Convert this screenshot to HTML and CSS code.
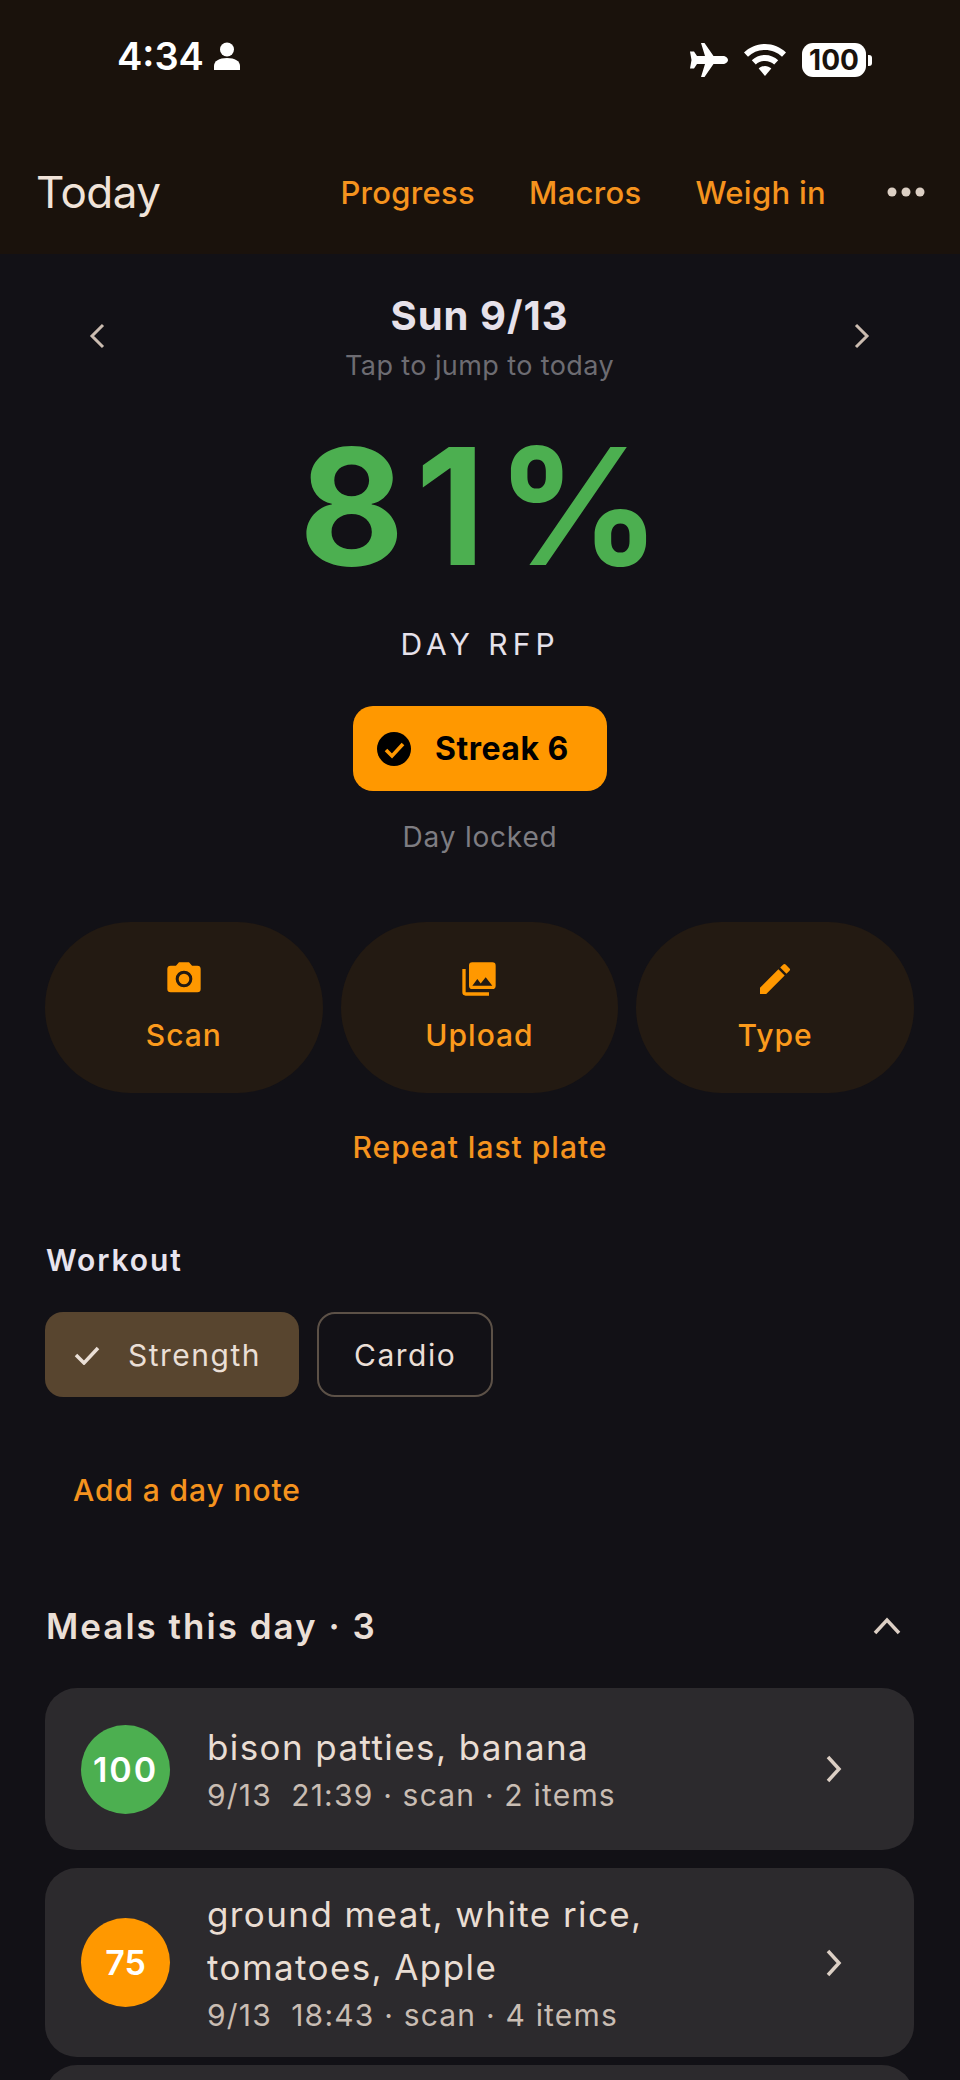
FILE: index.html
```html
<!DOCTYPE html>
<html lang="en">
<head>
  <meta charset="UTF-8">
  <title>Today</title>
  <link rel="stylesheet" href="styles.css">
</head>
<body>
  <header class="top">
    <div class="status">
      <div class="status-left">
        <span class="clock">4:34</span>
        <svg class="person" viewBox="0 0 26 28"><circle cx="13" cy="7.500" r="7"/><path d="M0 28v-4c0-5 5-8 13-8s13 3 13 8v4z"/></svg>
      </div>
      <div class="status-right">
        <svg class="plane" viewBox="0 0 38 34"><path d="M11 0h3.500l9 13h9.500c2.500 0 5 1.800 5 4s-2.500 4-5 4h-9.500l-9 13H11l4-13H7l-3 4.500H0l1.500-8.500L0 8.500h4L7 13h8z"/></svg>
        <svg class="wifi" viewBox="0 0 42 32"><path d="M21 0c8 0 15.500 3.200 21 8.500l-4 4.200C33.500 8.300 27.500 6 21 6S8.500 8.300 4 12.700L0 8.500C5.500 3.200 13 0 21 0z"/><path d="M21 11c5 0 9.700 2 13.200 5.300l-4 4.200C27.800 18.200 24.500 17 21 17s-6.800 1.200-9.200 3.500l-4-4.200C11.300 13 16 11 21 11z"/><path d="M21 22c2.300 0 4.600.9 6.300 2.400L21 32l-6.300-7.600c1.700-1.500 4-2.400 6.300-2.400z"/></svg>
        <div class="battery"><span class="battery-level">100</span><span class="battery-cap"></span></div>
      </div>
    </div>
    <nav class="appbar">
      <h1 class="title">Today</h1>
      <div class="links">
        <a class="link">Progress</a>
        <a class="link">Macros</a>
        <a class="link">Weigh in</a>
        <svg class="more" viewBox="0 0 38 12"><circle cx="5" cy="6" r="4.500"/><circle cx="19" cy="6" r="4.500"/><circle cx="33" cy="6" r="4.500"/></svg>
      </div>
    </nav>
  </header>

  <main class="content">
    <section class="date-row">
      <svg class="chev-side" viewBox="0 0 16 26"><path d="M14 2 3 13l11 11"/></svg>
      <div class="date-mid">
        <div class="date">Sun 9/13</div>
        <div class="date-hint">Tap to jump to today</div>
      </div>
      <svg class="chev-side" viewBox="0 0 16 26"><path d="m2 2 11 11L2 24"/></svg>
    </section>

    <section class="score">
      <div class="pct">81%</div>
      <div class="pct-label">DAY RFP</div>
      <button class="streak">
        <svg class="streak-icon" viewBox="0 0 34 34"><circle cx="17" cy="17" r="17" fill="#000"/><path d="m9 18 6 6 11-12" fill="none" stroke="#ff9800" stroke-width="3.600"/></svg>
        Streak 6
      </button>
      <div class="locked">Day locked</div>
    </section>

    <section class="actions">
      <button class="action">
        <svg class="action-icon" viewBox="0 0 24 24"><path d="M9 2 7.170 4H4a2 2 0 0 0-2 2v12a2 2 0 0 0 2 2h16a2 2 0 0 0 2-2V6a2 2 0 0 0-2-2h-3.170L15 2zm3 15a5 5 0 1 1 0-10 5 5 0 0 1 0 10z"/><circle cx="12" cy="12" r="3.200"/></svg>
        Scan
      </button>
      <button class="action">
        <svg class="action-icon" viewBox="0 0 24 24"><path d="M22 16V4a2 2 0 0 0-2-2H8a2 2 0 0 0-2 2v12a2 2 0 0 0 2 2h12a2 2 0 0 0 2-2zm-11-4 2.030 2.710L16 11l4 5H8zM2 6v14a2 2 0 0 0 2 2h14v-2H4V6z"/></svg>
        Upload
      </button>
      <button class="action">
        <svg class="action-icon" viewBox="0 0 24 24"><path d="M3 17.250V21h3.750L17.810 9.940l-3.750-3.750zM20.710 7.040a1 1 0 0 0 0-1.410l-2.340-2.340a1 1 0 0 0-1.410 0l-1.830 1.830 3.750 3.750z"/></svg>
        Type
      </button>
    </section>
    <a class="repeat">Repeat last plate</a>

    <section class="workout">
      <h2 class="workout-title">Workout</h2>
      <div class="chips">
        <span class="chip chip-on">
          <svg class="chip-check" viewBox="0 0 26 20"><path d="m2 10 8 8L24 3"/></svg>
          Strength
        </span>
        <span class="chip">Cardio</span>
      </div>
    </section>

    <a class="note">Add a day note</a>

    <div class="meals-head">
      <h2 class="meals-title">Meals this day · 3</h2>
      <svg class="chev-up" viewBox="0 0 28 18"><path d="m2 16 12-13 12 13"/></svg>
    </div>

    <section class="meals">
      <article class="meal">
        <span class="badge badge-green">100</span>
        <div class="meal-body">
          <div class="meal-name">bison patties, banana</div>
          <div class="meal-meta">9/13&nbsp; 21:39 · scan · 2 items</div>
        </div>
        <svg class="chev-row" viewBox="0 0 18 28"><path d="m3 2 11 12L3 26"/></svg>
      </article>
      <article class="meal">
        <span class="badge badge-orange">75</span>
        <div class="meal-body">
          <div class="meal-name">ground meat, white rice,<br>tomatoes, Apple</div>
          <div class="meal-meta">9/13&nbsp; 18:43 · scan · 4 items</div>
        </div>
        <svg class="chev-row" viewBox="0 0 18 28"><path d="m3 2 11 12L3 26"/></svg>
      </article>
      <article class="meal meal-cut"></article>
    </section>
  </main>
</body>
</html>
```

FILE: styles.css
```css
* {
  box-sizing: border-box;
}
html, body {
  margin: 0;
  height: 2080px;
  overflow: hidden;
}
body {
  background: #121116;
  color: #e8e4ee;
  font-family: Inter, "Noto Sans", sans-serif;
}
button {
  font-family: inherit;
  border: 0;
}

.top {
  height: 254px;
  background: #1a120c;
}
.content {
  height: 1826px;
  overflow: hidden;
}
.status {
  height: 147px;
  padding: 34px 88px 0 117px;
  display: flex;
  justify-content: space-between;
  align-items: flex-start;
}
.status-left {
  display: flex;
  align-items: center;
  gap: 10px;
}
.clock {
  font-size: 38px;
  line-height: 44px;
  font-weight: 600;
  color: #fff;
}
.person {
  width: 26px;
  height: 28px;
  fill: #fff;
}
.status-right {
  margin-top: 9px;
  display: flex;
  align-items: center;
  gap: 16px;
}
.plane {
  width: 38px;
  height: 34px;
  fill: #fff;
}
.wifi {
  width: 42px;
  height: 32px;
  fill: #fff;
}
.battery {
  display: flex;
  align-items: center;
  gap: 2px;
}
.battery-level {
  width: 64px;
  height: 34px;
  border-radius: 11px;
  background: #fff;
  color: #1a120c;
  font-size: 28px;
  line-height: 34px;
  font-weight: 700;
  text-align: center;
}
.battery-cap {
  width: 4px;
  height: 11px;
  background: #fff;
  border-radius: 0 3px 3px 0;
}

.appbar {
  padding: 0 35px 0 36px;
  height: 90px;
  display: flex;
  justify-content: space-between;
  align-items: center;
}
.title {
  margin: 0;
  font-size: 44px;
  font-weight: 400;
  letter-spacing: -0.5px;
  color: #f0e3d9;
}
.links {
  display: flex;
  align-items: center;
  gap: 54px;
}
.link {
  font-size: 31px;
  font-weight: 500;
  letter-spacing: 0.3px;
  color: #f5931e;
}
.more {
  width: 38px;
  height: 12px;
  margin-left: 7px;
  fill: #dccfc4;
}

.date-row {
  padding: 38px 90px 0 89px;
  display: flex;
  justify-content: space-between;
  align-items: flex-start;
}
.chev-side {
  margin-top: 31px;
  width: 16px;
  height: 26px;
  fill: none;
  stroke: #cbbcb0;
  stroke-width: 3;
}
.date-mid {
  text-align: center;
}
.date {
  font-size: 40px;
  line-height: 48px;
  font-weight: 700;
  letter-spacing: 1px;
  color: #e6e1ea;
}
.date-hint {
  margin-top: 8px;
  font-size: 27px;
  line-height: 36px;
  letter-spacing: 0.4px;
  color: #6d6c72;
}

.score {
  margin-top: 27px;
  display: flex;
  flex-direction: column;
  align-items: center;
}
.pct {
  padding-left: 11px;
  font-size: 162px;
  line-height: 190px;
  font-weight: 700;
  letter-spacing: 11px;
  color: #4caf50;
}
.pct-label {
  margin-top: 23px;
  font-size: 30px;
  line-height: 40px;
  letter-spacing: 5px;
  color: #e6e1ea;
}
.streak {
  margin-top: 42px;
  width: 254px;
  height: 85px;
  padding: 0 24px;
  border-radius: 20px;
  background: #ff9800;
  color: #000;
  font-size: 32px;
  font-weight: 700;
  letter-spacing: 0.5px;
  display: flex;
  align-items: center;
  gap: 24px;
}
.streak-icon {
  width: 34px;
  height: 34px;
  flex: none;
}
.locked {
  margin-top: 26px;
  font-size: 28px;
  line-height: 40px;
  letter-spacing: 0.8px;
  color: #7e7d82;
}

.actions {
  margin: 65px 46px 0 45px;
  display: grid;
  grid-template-columns: repeat(3, 1fr);
  gap: 18px;
}
.action {
  height: 171px;
  border-radius: 86px;
  background: #231a12;
  color: #fb9a1c;
  font-size: 30px;
  font-weight: 500;
  letter-spacing: 1px;
  display: flex;
  flex-direction: column;
  align-items: center;
  gap: 18px;
  padding-top: 37px;
}
.action-icon {
  width: 40px;
  height: 40px;
  fill: #ff9800;
}
.repeat {
  display: block;
  margin-top: 34px;
  text-align: center;
  font-size: 30px;
  line-height: 40px;
  font-weight: 500;
  letter-spacing: 1px;
  color: #f5931e;
}

.workout {
  margin: 73px 45px 0;
}
.workout-title {
  margin: 0 0 0 1px;
  font-size: 30px;
  line-height: 40px;
  font-weight: 600;
  letter-spacing: 1.900px;
  color: #e8e4ee;
}
.chips {
  margin-top: 32px;
  display: flex;
  gap: 18px;
}
.chip {
  height: 85px;
  padding: 0 35px;
  border: 2px solid #5c5147;
  border-radius: 18px;
  font-size: 30px;
  letter-spacing: 1.500px;
  color: #eadfd6;
  display: flex;
  align-items: center;
}
.chip-on {
  padding: 0 38px 0 29px;
  border: 0;
  background: #58452f;
  gap: 28px;
}
.chip-check {
  width: 26px;
  height: 20px;
  fill: none;
  stroke: #eadfd6;
  stroke-width: 3.500;
}
.note {
  display: block;
  margin: 73px 0 0 73px;
  font-size: 30px;
  line-height: 40px;
  font-weight: 500;
  letter-spacing: 0.9px;
  color: #f5931e;
}

.meals-head {
  margin: 94px 59px 0 46px;
  display: flex;
  justify-content: space-between;
  align-items: center;
}
.meals-title {
  margin: 0;
  font-size: 35px;
  line-height: 44px;
  font-weight: 600;
  letter-spacing: 2px;
  color: #eadfd6;
}
.chev-up {
  width: 28px;
  height: 18px;
  fill: none;
  stroke: #dccfc4;
  stroke-width: 3.500;
}
.meals {
  margin: 40px 46px 0 45px;
  display: flex;
  flex-direction: column;
  gap: 18px;
}
.meal {
  min-height: 162px;
  padding: 20px 71px 20px 36px;
  border-radius: 32px;
  background: #2c2a2d;
  display: flex;
  align-items: center;
}
.meal-cut {
  margin-top: -10px;
  min-height: 120px;
}
.badge {
  width: 89px;
  height: 89px;
  border-radius: 50%;
  flex: none;
  color: #fff;
  font-size: 34px;
  line-height: 89px;
  font-weight: 600;
  text-align: center;
}
.badge-green {
  background: #4caf50;
  letter-spacing: 2px;
}
.badge-orange {
  background: #ff9800;
}
.meal-body {
  margin-left: 37px;
  flex: 1;
}
.meal-name {
  font-size: 35px;
  line-height: 53px;
  letter-spacing: 1.400px;
  color: #e9ddd3;
}
.meal-meta {
  font-size: 30px;
  line-height: 43px;
  letter-spacing: 1.200px;
  color: #c9bdb3;
}
.chev-row {
  width: 18px;
  height: 28px;
  fill: none;
  stroke: #dccfc4;
  stroke-width: 3.500;
}
```
